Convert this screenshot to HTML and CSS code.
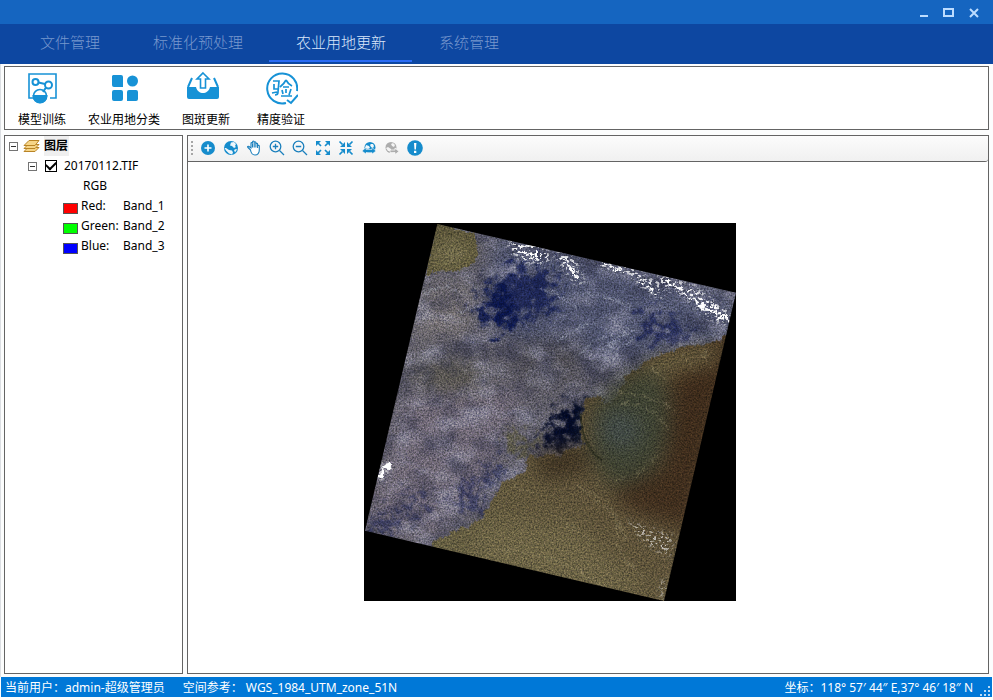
FILE: index.html
```html
<!DOCTYPE html>
<html lang="zh-CN">
<head>
<meta charset="utf-8">
<title>农业用地更新</title>
<link rel="stylesheet" href="styles.css">
</head>
<body>
<header>
  <div class="titlebar">
    <button class="win" aria-label="最小化"><svg width="11" height="11" viewBox="0 0 11 11"><path d="M2 9h8"/></svg></button>
    <button class="win" aria-label="最大化"><svg width="11" height="11" viewBox="0 0 11 11"><path d="M1 2h9v7H1z"/></svg></button>
    <button class="win" aria-label="关闭"><svg width="11" height="11" viewBox="0 0 11 11"><path d="M2 2l8 8M10 2l-8 8"/></svg></button>
  </div>
  <nav class="tabs">
    <a class="tab" href="#">文件管理</a>
    <a class="tab" href="#">标准化预处理</a>
    <a class="tab active" href="#">农业用地更新</a>
    <a class="tab" href="#">系统管理</a>
  </nav>
</header>

<div class="workspace">
  <section class="ribbon panel">
    <button class="tool">
      <svg width="32" height="34" viewBox="0 0 32 34" fill="none" stroke="#1792d6" stroke-width="2">
        <path d="M9 27H3V3h27v24h-6" stroke-width="1.6"/>
        <circle cx="9.500" cy="11" r="3"/><circle cx="22.500" cy="14" r="3.500"/>
        <path d="M12.500 11.500l6.500 1.500M20 16.500l-3 4.500"/>
        <circle cx="14" cy="25" r="6.500" stroke-width="1.600"/><path d="M7.500 25h13a6.500 6.500 0 0 1-13 0z" fill="#1792d6"/>
      </svg>
      <span>模型训练</span>
    </button>
    <button class="tool">
      <svg width="34" height="34" viewBox="0 0 34 34" fill="#1792d6">
        <path d="M6 4h8a2 2 0 0 1 2 2v10H7a2 2 0 0 1-2-2V5z"/><circle cx="25.500" cy="10" r="5.500"/>
        <path d="M7 19h7a2 2 0 0 1 2 2v7a2 2 0 0 1-2 2H7a2 2 0 0 1-2-2v-7a2 2 0 0 1 2-2zM22 19h7a2 2 0 0 1 2 2v7a2 2 0 0 1-2 2H20v-9a2 2 0 0 1 2-2z"/>
      </svg>
      <span>农业用地分类</span>
    </button>
    <button class="tool">
      <svg width="40" height="34" viewBox="0 0 40 34">
        <path d="M1 16h9c1 4 4 6 7 6s6-2 7-6h9v10a2 2 0 0 1-2 2H3a2 2 0 0 1-2-2z" fill="#1792d6"/>
        <path d="M6 7L2 16M28 7l4 9" stroke="#1792d6" stroke-width="2"/>
        <path d="M17 2l6 6h-3.500v9h-5V8H11z" fill="#fff" stroke="#1792d6" stroke-width="1.600"/>
      </svg>
      <span>图斑更新</span>
    </button>
    <button class="tool">
      <svg width="34" height="34" viewBox="0 0 34 34" fill="none" stroke="#1792d6" stroke-width="2">
        <path d="M22 32A15 15 0 1 1 33 20"/>
        <path d="M23 29l4 3 7-8"/>
        <path d="M9 10h6l-1 11q0 3-3 3M10 13v5h5M8 22l5-1M22 9q-2 4-6 7M22 9q2 4 6 6M19 16h6M18 19l1 4M22 18v4M27 18l-2 6M17 25h11" stroke-width="1.700"/>
      </svg>
      <span>精度验证</span>
    </button>
  </section>

  <main class="content">
    <aside class="layers panel">
      <ul class="tree">
        <li class="row root">
          <button class="expander" aria-label="折叠图层"></button>
          <svg class="stack" width="18" height="14" viewBox="0 0 18 14" fill="#f6d588" stroke="#b98426">
            <path d="M1 12.500l4-4h11l-4 4z"/><path d="M1 9.500l4-4h11l-4 4z"/><path d="M1 6.500l5-5h10l-4 5z"/>
          </svg>
          <strong>图层</strong>
        </li>
        <li class="row file">
          <button class="expander" aria-label="折叠影像"></button>
          <input class="check" type="checkbox" id="tif" checked>
          <label for="tif">20170112.TIF</label>
        </li>
        <li class="row mode">RGB</li>
        <li class="row band"><i class="swatch red"></i><span class="name">Red:</span><span>Band_1</span></li>
        <li class="row band"><i class="swatch green"></i><span class="name">Green:</span><span>Band_2</span></li>
        <li class="row band"><i class="swatch blue"></i><span class="name">Blue:</span><span>Band_3</span></li>
      </ul>
    </aside>

    <section class="viewer panel">
      <div class="toolbar">
        <span class="handle"></span>
        <button class="icon" aria-label="添加"><svg viewBox="0 0 16 16"><circle cx="8" cy="8" r="7" fill="#168ccc"/><path d="M8 4.500v7M4.500 8h7" stroke="#fff" stroke-width="1.600"/></svg></button>
        <button class="icon" aria-label="全图"><svg viewBox="0 0 16 16"><circle cx="8" cy="8" r="7" fill="#168ccc"/><path d="M1.500 8L3 8l3 2 3 .5 1 2-1 2-3-1-3-3zM8 2.500l3-.5 2 2-1 2 1 1-2 1-2-2-2-.5zM11 10l2-1 1 .5-2 3z" fill="#eef6fb"/></svg></button>
        <button class="icon" aria-label="平移"><svg viewBox="0 0 16 16" fill="#fff" stroke="#1c80bd" stroke-width="1.100"><path d="M4.500 10L2 7.500C1 6.500 2 6 3 6.500L5 8V3.500c0-1.200 1.500-1.200 1.500 0V2c0-1.300 1.700-1.300 1.700 0v.8c0-1.300 1.700-1.300 1.700 0V4c0-1 1.700-1 1.700 0v2c0-1 1.700-1 1.700 0v4c0 3-1.500 5-4.300 5S5 13 4.500 10z"/><path d="M6.500 3.500v4M8.200 2.500v5M9.900 3.500v4M11.600 5v3"/></svg></button>
        <button class="icon" aria-label="放大"><svg viewBox="0 0 16 16" fill="none" stroke="#1c80bd" stroke-width="1.300"><circle cx="6.500" cy="6.500" r="5.300"/><path d="M6.500 3.800v5.400M3.800 6.500h5.400M10.500 10.500l4.500 4.500"/></svg></button>
        <button class="icon" aria-label="缩小"><svg viewBox="0 0 16 16" fill="none" stroke="#1c80bd" stroke-width="1.300"><circle cx="6.500" cy="6.500" r="5.300"/><path d="M3.800 6.500h5.400M10.500 10.500l4.500 4.500"/></svg></button>
        <button class="icon" aria-label="固定放大"><svg viewBox="0 0 16 16" fill="#168ccc" stroke="#168ccc" stroke-width="1.700"><path d="M3 3l3 3M13 3l-3 3M3 13l3-3M13 13l-3-3"/><path stroke="none" d="M1 1h5L1 6zM15 1h-5l5 5zM1 15h5l-5-5zM15 15h-5l5-5z"/></svg></button>
        <button class="icon" aria-label="固定缩小"><svg viewBox="0 0 16 16" fill="#168ccc" stroke="#168ccc" stroke-width="1.700"><path d="M1.500 1.500l3 3M14.500 1.500l-3 3M1.500 14.500l3-3M14.500 14.500l-3-3"/><path stroke="none" d="M7 7H2l5-5zM9 7h5L9 2zM7 9H2l5 5zM9 9h5l-5 5z"/></svg></button>
        <button class="icon" aria-label="上一视图"><svg viewBox="0 0 16 16"><circle cx="9" cy="7.500" r="5.500" fill="#168ccc"/><path d="M5 5l3 1 1 2-2 1-3-1zM10 4l2 0 1 2-1 2-2-1-1-2z" fill="#f0f7fb"/><path d="M1 11l4-3.500v2h6v-2l4 3.500-4 3v-1.500H5V14z" fill="#168ccc" stroke="#f7f7f7" stroke-width=".6"/></svg></button>
        <button class="icon" aria-label="下一视图" disabled><svg viewBox="0 0 16 16"><circle cx="7" cy="7.500" r="5.500" fill="#adadad"/><path d="M2 8l2-1 3 2 0 2-3 0zM7 4l2-1 2 2-1 2-2-1z" fill="#f4f4f4"/><path d="M6 10h5V8l4 3.500-4 3v-2H6z" fill="#adadad" stroke="#f7f7f7" stroke-width=".8"/></svg></button>
        <button class="icon" aria-label="信息"><svg viewBox="0 0 16 16"><circle cx="8" cy="8" r="7.800" fill="#168ccc"/><path d="M7 3h2.400l-.5 6.500H7.500zM7 10.800h2.300V13H7z" fill="#fff"/></svg></button>
      </div>
      <div class="canvas">
        <svg class="scene" viewBox="0 9 1116 1134" role="img" aria-label="20170112.TIF">
          <defs>
            <clipPath id="frame"><path d="M220 12L1116 218 900 1143 3 932z"/></clipPath>
            <filter id="soft" x="-30%" y="-30%" width="160%" height="160%">
              <feGaussianBlur stdDeviation="30"/>
            </filter>
            <filter id="ragged" x="-30%" y="-30%" width="160%" height="160%">
              <feGaussianBlur stdDeviation="16" result="b"/>
              <feTurbulence type="fractalNoise" baseFrequency=".035" numOctaves="5" seed="4"/>
              <feDisplacementMap in="b" scale="170" xChannelSelector="R" yChannelSelector="G"/>
            </filter>
            <filter id="coast" x="-5%" y="-5%" width="110%" height="110%">
              <feTurbulence type="fractalNoise" baseFrequency=".05" numOctaves="4" seed="9" result="n"/>
              <feDisplacementMap in="SourceGraphic" in2="n" scale="34" xChannelSelector="R" yChannelSelector="G"/>
            </filter>
            <filter id="clouds" x="0" y="0" width="100%" height="100%">
              <feTurbulence type="fractalNoise" baseFrequency=".01 .016" numOctaves="7" seed="12"/>
              <feColorMatrix values="0 0 0 0 .6  0 0 0 0 .6  0 0 0 0 .68  3 0 0 0 -1.350"/>
            </filter>
            <filter id="shade" x="0" y="0" width="100%" height="100%">
              <feTurbulence type="fractalNoise" baseFrequency=".014" numOctaves="7" seed="31"/>
              <feColorMatrix values="0 0 0 0 .15  0 0 0 0 .16  0 0 0 0 .25  0 3 0 0 -1.350"/>
            </filter>
            <filter id="grain" x="0" y="0" width="100%" height="100%">
              <feTurbulence type="fractalNoise" baseFrequency=".2" numOctaves="3" seed="5"/>
              <feColorMatrix values="1.300 .2 0 0 -.25  1.200 .3 0 0 -.25  1.200 .1 .2 0 -.25  0 0 0 0 1"/>
            </filter>
            <filter id="specks" x="-10%" y="-10%" width="120%" height="120%">
              <feGaussianBlur in="SourceAlpha" stdDeviation="10" result="m"/>
              <feTurbulence type="fractalNoise" baseFrequency=".09 .12" numOctaves="4" seed="8"/>
              <feColorMatrix values="0 0 0 0 1  0 0 0 0 1  0 0 0 0 1  12 0 0 0 -6.600"/>
              <feComposite in2="m" operator="in"/>
            </filter>
            <linearGradient id="sea" x1="0" y1="1" x2="1" y2="0">
              <stop offset="0" stop-color="#686345"/><stop offset=".45" stop-color="#5e533a"/><stop offset="1" stop-color="#443421"/>
            </linearGradient>
          </defs>
          <path d="M0 9h1116v1134H0z" fill="#000"/>
          <g clip-path="url(#frame)">
            <path d="M0 0h1116v1143H0z" fill="#605e68"/>
            <g filter="url(#soft)">
              <path d="M400 30L1116 210V380L820 430 560 420 350 300z" fill="#50556f"/>
              <path d="M120 530L480 500 380 780 210 960 0 930z" fill="#6f6875"/>
              <path d="M180 200L340 200 320 340 140 350z" fill="#757072"/>
              <path d="M130 430L330 420 390 510 200 520z" fill="#58554f"/>
              <path d="M470 360L670 360 620 480 460 480z" fill="#4c4a50"/>
            </g>
            <path d="M0 9h1116v1134H0z" filter="url(#clouds)" opacity=".55"/>
            <path d="M0 9h1116v1134H0z" filter="url(#shade)" opacity=".45"/>
            <g filter="url(#ragged)" fill="#151e50">
              <path d="M400 170l90-30 80 20 10 80-70 50-90 35-60-15-10-60z" opacity=".85"/>
              <path d="M390 190l60 40-10 90-70-10z" fill="#091448"/>
              <path d="M830 280l80 20 70 40-40 30-90-20z" opacity=".75"/>
              <path d="M620 550l60 10-10 110-110 20-30-30 50-60z" fill="#020924"/>
              <path d="M370 730l60 10-10 40-60 0z" opacity=".7"/>
              <path d="M270 800l60-20 40 60-40 30-60-10z" opacity=".55"/>
              <path d="M130 820l60 10-20 40-60-10zM20 890l80 0 0 50-70 0z" opacity=".6"/>
            </g>
            <path d="M215 0L330 40 345 100 310 140 185 165z" fill="#5d573b" filter="url(#coast)"/>
            <path d="M220 90l60-20 40 20-40 40-70 5z" fill="#7a7452" filter="url(#soft)"/>
            <path d="M450 635l60 10-10 60-60-10-20-30z" fill="#5c5947" filter="url(#ragged)"/>
            <g filter="url(#coast)">
              <path d="M1130 330L1040 370 960 380 860 415 790 465 765 520 735 555 705 520 665 540 650 590 655 675 580 705 495 712 485 755 415 790 375 860 335 910 270 935 220 960 200 1010 900 1180 1130 1130z" fill="url(#sea)"/>
            </g>
            <g filter="url(#soft)">
              <path d="M680 570L740 500 850 440 910 500 920 650 850 790 740 800 680 700z" fill="#3e4232"/>
              <path d="M710 590l80-20 50 60-50 60-80-30z" fill="#414a47"/>
              <path d="M940 430L1100 400 980 930 800 870 740 820 900 740z" fill="#392718" opacity=".8"/>
              <path d="M840 420l210-50 10 60-190 40z" fill="#70694a" opacity=".75"/>
              <path d="M500 710l150-30 40 60-140 40z" fill="#3b3020"/>
              <path d="M340 900l280 20 230 190-80 20-430-100z" fill="#706848" opacity=".7"/>
            </g>
            <path d="M650 580q0 50 20 90t45 50" fill="none" stroke="#282b1c" stroke-width="6" opacity=".7"/>
            <g fill="none" stroke="#b1a780" stroke-width="4" opacity=".28" filter="url(#coast)">
              <path d="M690 840q80 50 70 110t80 120M640 800q120 40 140 160M560 880q80 40 120 90M450 800l90 30M750 520q100 0 180 50M770 550q90-10 140 80M740 780q90 0 140-80M390 990q170 0 330 110M850 440l60 40M960 400l30 60M1020 390l20 60M240 110l50-30M250 130l60-40"/>
            </g>
            <g fill="none" stroke="#aeb5c6" stroke-width="5" opacity=".4" filter="url(#coast)">
              <path d="M580 370q60-50 110-60M640 410q40-50 120-70M720 420q20-70 90-90M750 420q20-50 60-60M530 210q80 10 110 60M640 220q80 0 160 40M180 220q70-30 110 0M250 290l90-30"/>
            </g>
            <g filter="url(#specks)">
              <path d="M430 65l80 0 50 40-10 30-70-10-40-30zM570 90l60 20 30 80-30 0-40-60zM700 120l90 10 90 60 20 50-50-30-60-50-80-20zM880 160l110 40 110 80-10 40-60-30-60-60-90-40z"/>
              <path d="M60 725l18 12-10 15-8 30-22-8z"/>
              <path d="M780 900l150 50-10 60-60-30zM890 1080l20 0-8 60-14-10z" opacity=".6"/>
            </g>
            <g fill="none" stroke="#fff" stroke-width="6" stroke-linecap="round" stroke-dasharray="13 8 5 10 16 10" filter="url(#coast)">
              <path d="M475 95l40 7M480 115l25 0M595 110l45 60M720 132l60 25M830 180l45 45M910 185l110 75M1010 260l70 35M1050 255l10 40M1085 285l10 20"/>
              <path d="M62 742l12-4M48 770l6-10" stroke-width="14"/>
            </g>
            <path class="grain" d="M0 9h1116v1134H0z" filter="url(#grain)"/>
          </g>
        </svg>
      </div>
    </section>
  </main>
</div>

<footer class="status">
  <span class="user">当前用户：admin-超级管理员</span>
  <span>空间参考： WGS_1984_UTM_zone_51N</span>
  <span class="coords">坐标：118° 57′ 44″ E,37° 46′ 18″ N</span>
  <svg class="grip" width="12" height="12" viewBox="0 0 12 12" fill="#b9dcf6"><path d="M9 1h2v2H9zM5 5h2v2H5zM9 5h2v2H9zM1 9h2v2H1zM5 9h2v2H5zM9 9h2v2H9z"/></svg>
</footer>
</body>
</html>
```
FILE: styles.css
```css
* {
  box-sizing: border-box;
}

body {
  margin: 0;
  min-height: 100vh;
  display: flex;
  flex-direction: column;
  background: #fcfdfd;
  color: #000;
  font: 12px/20px "Noto Sans", "Noto Sans CJK SC", sans-serif;
}

button {
  padding: 0;
  border: 0;
  background: none;
  color: inherit;
  font: inherit;
}

.panel {
  border: 1px solid #646464;
  background: #fff;
}

/* Header */
.titlebar {
  height: 24px;
  padding-right: 14px;
  display: flex;
  justify-content: flex-end;
  align-items: center;
  gap: 14px;
  background: #1565c0;
}

.win {
  display: flex;
}

.win svg {
  fill: none;
  stroke: #bcdcff;
  stroke-width: 2;
}

.tabs {
  height: 40px;
  padding-left: 13px;
  display: flex;
  background: #0d47a1;
}

.tab {
  padding: 0 26px 0 27px;
  border-bottom: 2px solid transparent;
  margin-bottom: 2px;
  color: #7898ce;
  font: 300 15px/36px "Noto Sans CJK SC", sans-serif;
  text-decoration: none;
}

.tab.active {
  color: #dbe7fb;
  border-color: #2b6cf5;
}

/* Ribbon */
.workspace {
  flex: 1;
  display: flex;
  flex-direction: column;
  gap: 5px;
  padding: 2px 4px 3px 3px;
  border-left: 1px solid #dcdfe3;
}

.ribbon {
  height: 64px;
  padding: 4px 8px 0;
  display: flex;
  align-items: flex-start;
  gap: 17px;
}

.tool {
  min-width: 58px;
  display: flex;
  flex-direction: column;
  align-items: center;
}

.tool span {
  line-height: 30px;
}

/* Content */
.content {
  flex: 1;
  display: flex;
  gap: 4px;
}

.layers {
  flex: 0 0 179px;
}

.tree {
  margin: 0;
  padding: 0;
  list-style: none;
}

.row {
  height: 20px;
  display: flex;
  align-items: center;
  white-space: nowrap;
}

.root {
  padding-left: 4px;
}

.root strong {
  padding-right: 1px;
  background: #efefef;
}

.stack {
  margin: 0 3px 0 5px;
}

.file {
  padding-left: 23px;
}

.expander {
  width: 9px;
  height: 9px;
  border: 1px solid #747474;
  background: linear-gradient(#333, #333) center / 5px 1px no-repeat #fff;
}

.check {
  appearance: none;
  width: 12px;
  height: 12px;
  margin: 0 7px 0 8px;
  border: 1px solid #000;
  background: #fff;
  display: grid;
  place-items: center;
}

.check:checked::after {
  content: "";
  width: 8px;
  height: 5px;
  margin-bottom: 3px;
  border: solid #000;
  border-width: 0 0 2px 2px;
  transform: rotate(-45deg);
}

.mode {
  padding-left: 78px;
}

.band {
  padding-left: 58px;
}

.swatch {
  width: 15px;
  height: 11px;
  margin: 4px 3px 0 0;
  border: 1px solid #555;
}

.red { background: #f00; }
.green { background: #0f0; }
.blue { background: #00f; }

.name {
  width: 42px;
}

/* Viewer */
.viewer {
  flex: 1;
  display: flex;
  flex-direction: column;
}

.toolbar {
  height: 26px;
  padding-bottom: 1px;
  display: flex;
  align-items: center;
  border-bottom: 1px solid #646464;
  border-radius: 0 3px 3px 0;
  background: linear-gradient(#fcfcfc, #f0f0f0);
}

.handle {
  width: 2px;
  height: 14px;
  margin: 0 3px;
  background: repeating-linear-gradient(#a6a6a6 0 2px, transparent 2px 4px);
}

.icon {
  width: 23px;
  display: flex;
  justify-content: center;
}

.icon svg {
  width: 16px;
  height: 16px;
}

.canvas {
  flex: 1;
  display: flex;
  align-items: flex-start;
  justify-content: center;
  padding: 61px 76px 0 0;
}

.scene {
  flex: 0 1 372px;
  background: #000;
}

.scene filter {
  color-interpolation-filters: sRGB;
}

.grain {
  mix-blend-mode: overlay;
  opacity: .45;
}

/* Status bar */
.status {
  height: 20px;
  margin: 0 1px 3px;
  padding: 0 1px 0 4px;
  display: flex;
  line-height: 22px;
  background: #0078d7;
  color: #fff;
}

.user {
  margin-right: 18px;
}

.coords {
  margin-left: auto;
  margin-right: 6px;
}

.grip {
  align-self: flex-end;
}
```
